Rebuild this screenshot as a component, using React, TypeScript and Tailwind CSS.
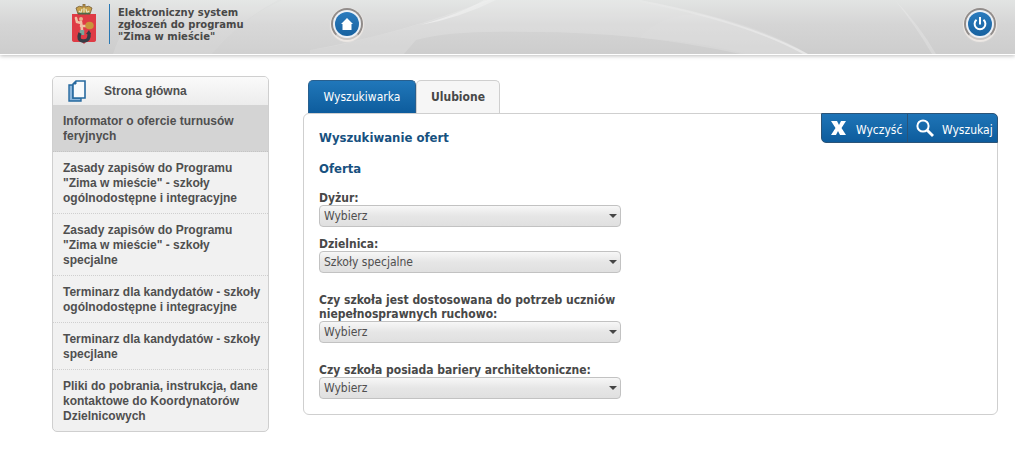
import React, { useState } from "react";

const menuItems = [
  "Informator o ofercie turnusów feryjnych",
  'Zasady zapisów do Programu "Zima w mieście" - szkoły ogólnodostępne i integracyjne',
  'Zasady zapisów do Programu "Zima w mieście" - szkoły specjalne',
  "Terminarz dla kandydatów - szkoły ogólnodostępne i integracyjne",
  "Terminarz dla kandydatów - szkoły specjlane",
  "Pliki do pobrania, instrukcja, dane kontaktowe do Koordynatorów Dzielnicowych",
];

function Waves() {
  return (
    <svg
      className="absolute inset-0 h-full w-full"
      viewBox="0 0 1015 54"
      preserveAspectRatio="none"
      aria-hidden="true"
    >
      <defs>
        <linearGradient id="sheen" x1="0" y1="0" x2="1" y2="0">
          <stop offset="0" stopColor="#fff" stopOpacity="0.5" />
          <stop offset="1" stopColor="#fff" stopOpacity="0.2" />
        </linearGradient>
        <linearGradient id="fade" x1="0" y1="0" x2="1" y2="0">
          <stop offset="0" stopColor="#fff" stopOpacity="0.05" />
          <stop offset="1" stopColor="#fff" stopOpacity="0.4" />
        </linearGradient>
      </defs>
      <path d="M113 54Q122 25 148 0H278Q238 22 212 54Z" fill="#fff" opacity="0.12" />
      <path d="M212 54Q238 20 282 0H492Q430 24 360 40Q330 48 310 50V54Z" fill="#fff" opacity="0.08" />
      <path d="M310 50Q400 34 488 0H640Q750 20 808 54H740Q640 32 530 32Q450 30 416 40L404 54H310Z" fill="#fff" opacity="0.16" />
      <path d="M420 25Q460 14 484 0H496Q460 18 420 25Z" fill="url(#sheen)" />
      <path d="M640 0Q750 22 808 54H803Q750 24 640 2Z" fill="url(#fade)" />
      <path d="M640 38Q700 42 745 54H808Q765 26 700 14Q660 14 640 38Z" fill="#fff" opacity="0.05" />
      <path d="M895 0Q920 26 936 54H932Q915 25 895 0Z" fill="#fff" opacity="0.2" />
    </svg>
  );
}

function CoatOfArms() {
  return (
    <svg width="26" height="40" viewBox="0 0 26 40" role="img" aria-label="Herb Warszawy">
      <path d="M1 10H25V36Q25 38 22 38H15L13 40L11 38H4Q1 38 1 36Z" fill="#df3b45" />
      <path d="M7 10L5 4Q8 1 12 3V0H14V3Q18 1 21 4L19 10Z" fill="#c7a14b" stroke="#735c35" strokeWidth="0.8" />
      <path d="M8 7L10 9L11 5M18 7L16 9L15 5M13 4V9" stroke="#e8e4c0" strokeWidth="1.2" fill="none" />
      <path d="M7 9.5H19" stroke="#4d6b4c" strokeWidth="1.6" />
      <path d="M5 14L6 18L10 19M10 18L11 26M10 22L16 22" stroke="#f0c0a4" strokeWidth="2.6" fill="none" strokeLinecap="round" />
      <circle cx="10" cy="15" r="2" fill="#e7b48f" />
      <ellipse cx="18.5" cy="21.5" rx="4.2" ry="3.8" fill="#c9953a" />
      <path d="M11 26L11 31" stroke="#78a79a" strokeWidth="4.5" />
      <path d="M9 29Q6 36.5 12 37Q19 37.500 18 29" stroke="#353c45" strokeWidth="3.4" fill="none" />
      <path d="M15 30L18 26L20 30" fill="#353c45" />
    </svg>
  );
}

function RoundLink({ label, children }: { label: string; children: React.ReactNode }) {
  return (
    <a
      href="#"
      aria-label={label}
      className="flex size-8 items-center justify-center rounded-full border-2 border-[#918c8a] border-b-[#c9c6c4] bg-[#edf1f6] shadow-[0_1px_1px_1px_#eee9e5]"
    >
      <span className="flex size-6 items-center justify-center rounded-full bg-linear-to-b from-[#2b7bbd] to-[#1762a0]">
        {children}
      </span>
    </a>
  );
}

function Field({ id, label, options }: { id: string; label: string; options: string[] }) {
  return (
    <div className="w-[304px] max-w-full">
      <label htmlFor={id} className="block text-[12px] leading-[14px] font-bold text-[#484848]">
        {label}
      </label>
      <div className="grid w-[302px] max-w-full items-center">
        <select
          id={id}
          className="col-start-1 row-start-1 h-[22px] w-full appearance-none rounded-[4px] border border-[#c2c2c2] bg-linear-to-b from-[#f7f7f7] from-0% via-[#e6e6e6] via-50% to-[#e0e0e0] px-1 text-[12px] text-[#4f4f4f]"
        >
          {options.map((o) => (
            <option key={o}>{o}</option>
          ))}
        </select>
        <svg
          className="pointer-events-none col-start-1 row-start-1 mr-1 justify-self-end"
          width="8"
          height="4"
          viewBox="0 0 8 4"
          aria-hidden="true"
        >
          <path d="M0 0H8L4 4Z" fill="#454545" />
        </svg>
      </div>
    </div>
  );
}

export default function App() {
  const [tab, setTab] = useState("search");
  return (
    <div className="min-h-screen bg-white font-['DejaVu_Sans_Condensed','DejaVu_Sans',sans-serif]">
      <header className="relative mb-[22px] h-[54px] bg-linear-to-b from-[#e2e4e3] from-0% via-[#d5d5d5] via-45% to-[#cdcdcd] shadow-[0_1px_0_#fff,0_2px_4px_#bdbdbd]">
        <Waves />
        <div className="relative flex h-full items-start pr-[19px] pl-[71px]">
          <div className="flex w-[260px] pt-1">
            <CoatOfArms />
            <div className="ml-3 w-px shrink-0 self-stretch bg-[#2878b4]" />
            <div className="pt-[3px] pl-2 font-['DejaVu_Sans',sans-serif] text-[10px] leading-[12px] font-bold text-[#484848]">
              <p>Elektroniczny system</p>
              <p>zgłoszeń do programu</p>
              <p>"Zima w mieście"</p>
            </div>
          </div>
          <nav className="flex flex-1 justify-between pt-2">
            <RoundLink label="Strona główna">
              <svg width="12" height="12" viewBox="0 0 12 12" aria-hidden="true">
                <path d="M6 0L12 6H10.5V12H1.5V6H0Z" fill="#fff" />
              </svg>
            </RoundLink>
            <RoundLink label="Wyloguj">
              <svg width="14" height="14" viewBox="0 0 14 14" aria-hidden="true" fill="none" stroke="#fff" strokeWidth="2">
                <path d="M3.5 2.8A5.4 5.4 0 1 0 10.5 2.8M7 0V7.5" />
              </svg>
            </RoundLink>
          </nav>
        </div>
      </header>

      <div className="flex items-start gap-[34px] pr-[17px] pl-[52px]">
        <aside className="w-[217px] shrink-0 overflow-hidden rounded-[5px] border border-[#cfcfcf] bg-[#f1f1f1] font-['Liberation_Sans',sans-serif] text-[12px] leading-[15px] font-bold text-[#4f4f4f]">
          <a href="#" className="flex h-7 items-center bg-linear-to-b from-[#fafafa] to-[#ececec] pl-[15px]">
            <svg width="18" height="22" viewBox="0 0 18 22" aria-hidden="true">
              <path d="M1 5V21H13V18H5V5Z" fill="#8bb6dc" stroke="#26699f" strokeWidth="1.4" />
              <path d="M8 1H17V18H5V4Z" fill="#f7fafc" stroke="#26699f" strokeWidth="1.6" />
              <path d="M8 1V4H5" fill="#26699f" stroke="#26699f" />
            </svg>
            <span className="ml-[18px]">Strona główna</span>
          </a>
          <nav>
            {menuItems.map((text, i) => (
              <a
                key={text}
                href="#"
                className={
                  i === 0
                    ? "block border-b border-dotted border-[#c4c4c4] bg-[#d4d4d4] pt-[9px] pr-1 pb-[7px] pl-[10px]"
                    : "block border-b border-dotted border-[#cfcfcf] pt-[9px] pr-1 pb-[7px] pl-[10px] last:border-b-0"
                }
              >
                {text}
              </a>
            ))}
          </nav>
        </aside>

        <main className="min-w-0 flex-1 pt-1">
          <div role="tablist" className="flex h-[33px] pl-[5px] text-[12px]">
            <button
              role="tab"
              aria-selected={tab === "search"}
              onClick={() => setTab("search")}
              className="w-[108px] rounded-t-[5px] border border-b-0 border-[#285f8e] bg-linear-to-b from-[#2077ba] from-0% via-[#186bac] via-45% to-[#0d5c9d] text-white"
            >
              Wyszukiwarka
            </button>
            <button
              role="tab"
              aria-selected={tab === "favourites"}
              onClick={() => setTab("favourites")}
              className="w-[84px] rounded-t-[5px] border border-b-0 border-[#cfcfcf] bg-[#f6f6f6] font-bold text-[#484848]"
            >
              Ulubione
            </button>
          </div>
          <section className="rounded-[6px] border border-[#cfcfcf] pb-[15px] pl-[15px]">
            <div className="-mt-px -mr-px flex items-start justify-between">
              <div className="text-[13px] leading-[15px] font-bold text-[#17517f]">
                <h1 className="pt-[17px]">Wyszukiwanie ofert</h1>
                <h2 className="pt-4">Oferta</h2>
              </div>
              <div className="flex h-[30px] overflow-hidden rounded-tr-[5px] rounded-bl-[5px] border border-[#2b5478] bg-linear-to-b from-[#1e74b7] from-0% via-[#176aab] via-45% to-[#0d5c9d] text-[12px] text-white">
                <button className="flex w-[86px] items-center gap-[10px] border-r border-[#2b5478] pl-[9px]">
                  <svg width="15" height="14" viewBox="0 0 15 14" aria-hidden="true">
                    <path d="M0 0H6L8 4L10 0H15L10.5 7L15 14H9L7 10L5 14H0L4.5 7Z" fill="#fff" />
                  </svg>
                  <span className="pt-[3px]">Wyczyść</span>
                </button>
                <button className="flex w-[89px] items-center gap-2 pl-[8px]">
                  <svg width="18" height="18" viewBox="0 0 18 18" fill="none" stroke="#fff" aria-hidden="true">
                    <circle cx="7" cy="7" r="5.6" strokeWidth="2" />
                    <path d="M11 11L17 17" strokeWidth="2.8" />
                  </svg>
                  <span className="pt-[3px]">Wyszukaj</span>
                </button>
              </div>
            </div>
            <form className="flex flex-col gap-5 pt-[15px]">
              <div className="flex flex-col gap-[10px]">
                <Field id="duty" label="Dyżur:" options={["Wybierz", "Tak", "Nie"]} />
                <Field id="district" label="Dzielnica:" options={["Szkoły specjalne", "Wybierz"]} />
              </div>
              <Field
                id="access"
                label="Czy szkoła jest dostosowana do potrzeb uczniów niepełnosprawnych ruchowo:"
                options={["Wybierz", "Tak", "Nie"]}
              />
              <Field
                id="barriers"
                label="Czy szkoła posiada bariery architektoniczne:"
                options={["Wybierz", "Tak", "Nie"]}
              />
            </form>
          </section>
        </main>
      </div>
    </div>
  );
}
